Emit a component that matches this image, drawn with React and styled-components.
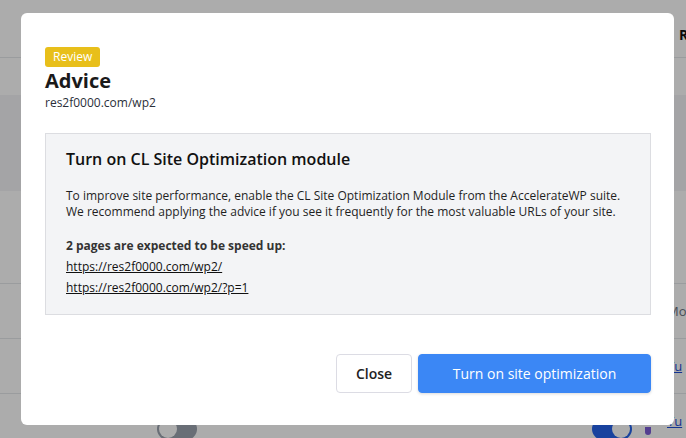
import React from "react";
import styled, { createGlobalStyle } from "styled-components";

const GlobalStyle = createGlobalStyle`
  html, body {
    margin: 0;
    padding: 0;
    width: 686px;
    height: 438px;
    overflow: hidden;
    font-family: "Open Sans", "Liberation Sans", sans-serif;
    background: #fff;
  }
  * { box-sizing: border-box; }
`;

const rows = [
  { right: "Mo", kind: "text" },
  { right: "Tu", kind: "link" },
  { right: "Tu", kind: "link", toggles: true },
];

const App = () => {
  return (
    <>
      <GlobalStyle />
      <Page>
        <HeaderRow>
          <HeaderCell>R</HeaderCell>
        </HeaderRow>
        <Spacer />
        <Band />
        <Spacer $h={92} />
        {rows.map((row, i) => (
          <TableRow key={i}>
            {row.toggles && (
              <>
                <Toggle $on={false} $left={157} />
                <Toggle $on={true} $left={592} />
                <PurpleDot />
              </>
            )}
            <RowText $kind={row.kind}>{row.right}</RowText>
          </TableRow>
        ))}
      </Page>

      <Overlay>
        <Modal>
          <Badge>Review</Badge>
          <Title>Advice</Title>
          <SiteUrl>res2f0000.com/wp2</SiteUrl>

          <AdviceBox>
            <BoxTitle>Turn on CL Site Optimization module</BoxTitle>
            <BoxText>
              To improve site performance, enable the CL Site Optimization Module from the AccelerateWP suite.
              <br />
              We recommend applying the advice if you see it frequently for the most valuable URLs of your site.
            </BoxText>
            <PagesLabel>2 pages are expected to be speed up:</PagesLabel>
            <PageLink href="#">https://res2f0000.com/wp2/</PageLink>
            <PageLink href="#">https://res2f0000.com/wp2/?p=1</PageLink>
          </AdviceBox>

          <Footer>
            <Button>Close</Button>
            <Button $primary>Turn on site optimization</Button>
          </Footer>
        </Modal>
      </Overlay>
    </>
  );
};

const Page = styled.div`
  position: relative;
  width: 686px;
  height: 438px;
  background: #fff;
  display: flex;
  flex-direction: column;
  overflow: hidden;
`;

const HeaderRow = styled.div`
  height: 58px;
  flex-shrink: 0;
  display: flex;
  align-items: center;
  border-bottom: 1px solid #e5e7eb;
  padding: 12px 0 0 679px;
`;

const HeaderCell = styled.span`
  font-weight: 700;
  font-size: 14px;
  color: #111;
  white-space: nowrap;
`;

const Spacer = styled.div`
  height: ${(p) => p.$h || 37}px;
  flex-shrink: 0;
`;

const Band = styled.div`
  height: 96px;
  flex-shrink: 0;
  background: #f3f4f6;
`;

const TableRow = styled.div`
  position: relative;
  height: 55px;
  flex-shrink: 0;
  border-top: 1px solid #e5e7eb;
  display: flex;
  align-items: center;
  padding-left: 667px;
`;

const RowText = styled.span`
  font-size: 13px;
  white-space: nowrap;
  color: ${(p) => (p.$kind === "link" ? "#1d4ed8" : "#6b7280")};
  text-decoration: ${(p) => (p.$kind === "link" ? "underline" : "none")};
`;

const Toggle = styled.span`
  position: absolute;
  top: 24px;
  left: ${(p) => p.$left}px;
  width: 40px;
  height: 22px;
  border-radius: 11px;
  background: ${(p) => (p.$on ? "#2563eb" : "#9ca3af")};
  &::after {
    content: "";
    position: absolute;
    top: 2px;
    left: ${(p) => (p.$on ? "20px" : "2px")};
    width: 18px;
    height: 18px;
    border-radius: 50%;
    background: #fff;
  }
`;

const PurpleDot = styled.span`
  position: absolute;
  top: 33px;
  left: 645px;
  width: 6px;
  height: 8px;
  border-radius: 0 0 3px 3px;
  background: #7c5cd6;
`;

const Overlay = styled.div`
  position: fixed;
  inset: 0;
  background: rgba(0, 0, 0, 0.325);
  padding: 13px 12px 13px 21px;
`;

const Modal = styled.div`
  width: 653px;
  height: 412px;
  background: #fff;
  border-radius: 6px;
  padding: 34px 23px 0 24px;
  display: flex;
  flex-direction: column;
  align-items: flex-start;
`;

const Badge = styled.span`
  display: inline-flex;
  align-items: center;
  height: 20px;
  padding: 0 8px;
  border-radius: 3px;
  background: #e8bf1a;
  color: #fff;
  font-size: 12px;
  line-height: 1;
`;

const Title = styled.h2`
  margin: 0;
  font-size: 20px;
  line-height: 28px;
  font-weight: 700;
  color: #1a1a1a;
`;

const SiteUrl = styled.div`
  font-size: 12px;
  line-height: 16px;
  color: #2b2f3a;
`;

const AdviceBox = styled.div`
  margin-top: 22px;
  width: 606px;
  background: #f3f4f6;
  border: 1px solid #dcdde1;
  padding: 13px 20px 18px 20px;
  display: flex;
  flex-direction: column;
  align-items: flex-start;
`;

const BoxTitle = styled.h3`
  margin: 0;
  font-size: 16px;
  line-height: 24px;
  font-weight: 600;
  color: #111;
`;

const BoxText = styled.p`
  margin: 17px 0 0;
  font-size: 12px;
  line-height: 16px;
  color: #1f1f1f;
`;

const PagesLabel = styled.p`
  margin: 18px 0 0;
  font-size: 12px;
  line-height: 16px;
  font-weight: 700;
  color: #333;
`;

const PageLink = styled.a`
  margin-top: 5px;
  font-size: 12px;
  line-height: 16px;
  color: #111;
  text-decoration: underline;
`;

const Footer = styled.div`
  align-self: stretch;
  margin-top: 39px;
  display: flex;
  justify-content: flex-end;
  gap: 6px;
`;

const Button = styled.button`
  height: 39px;
  padding: 0;
  white-space: nowrap;
  width: ${(p) => (p.$primary ? "233px" : "76px")};
  border-radius: 4px;
  font-family: "Open Sans", "Liberation Sans", sans-serif;
  font-size: 14px;
  font-weight: ${(p) => (p.$primary ? 400 : 600)};
  color: ${(p) => (p.$primary ? "#fff" : "#222")};
  background: ${(p) => (p.$primary ? "#3b87f5" : "#fff")};
  border: 1px solid ${(p) => (p.$primary ? "#3b87f5" : "#dcdce4")};
  box-shadow: ${(p) => (p.$primary ? "0 1px 3px rgba(0,0,0,0.15)" : "none")};
  cursor: pointer;
`;

export default App;
